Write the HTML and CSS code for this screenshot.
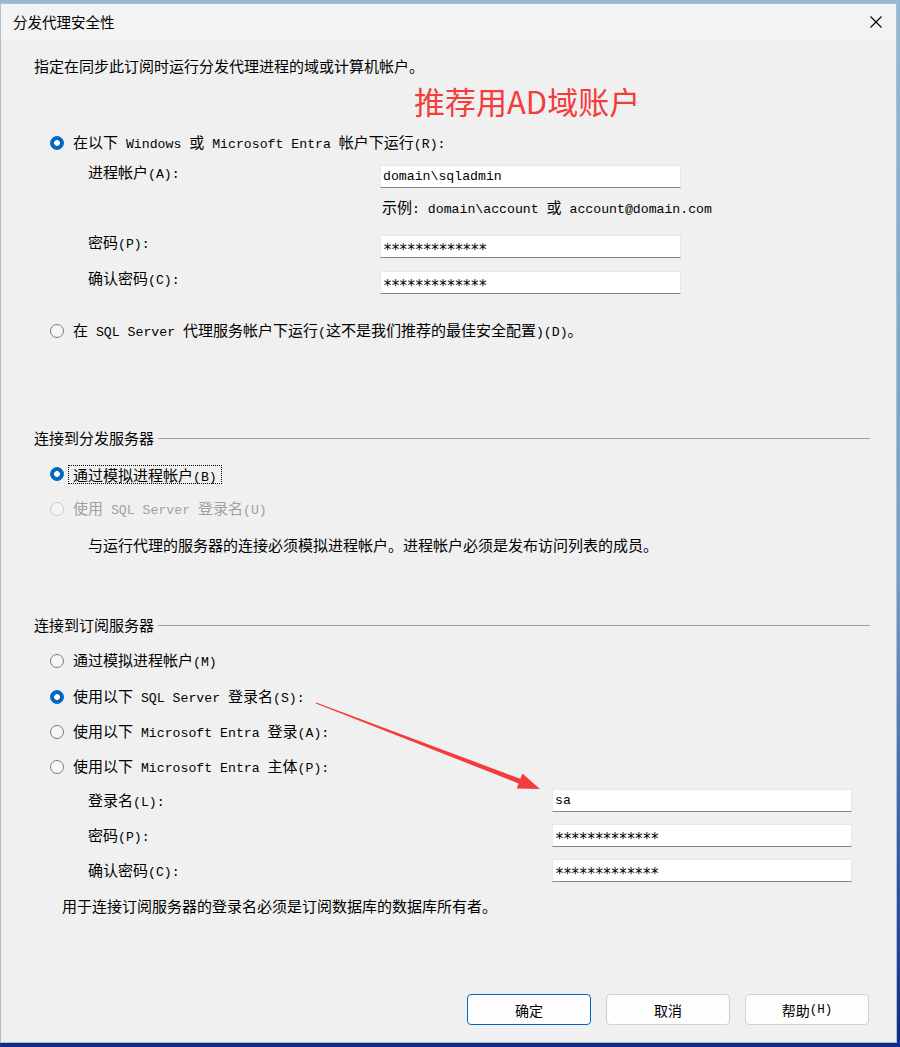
FILE: index.html
```html
<!DOCTYPE html>
<html lang="zh-CN">
<head>
<meta charset="utf-8">
<title>分发代理安全性</title>
<link rel="stylesheet" href="styles.css">
</head>
<body>
<div class="desktop">
  <div class="window">
    <div class="titlebar">
      <span class="title">分发代理安全性</span>
      <span class="close"><svg width="12" height="12" viewBox="0 0 12 12"><path d="M0.5 0.5 L11.5 11.5 M11.5 0.5 L0.5 11.5" stroke="#000" stroke-width="1.1" fill="none"/></svg></span>
    </div>
    <div class="content">
      <div class="row intro">指定在同步此订阅时运行分发代理进程的域或计算机帐户。</div>
      <div class="row note-red">推荐用AD域账户</div>
      <div class="row radio-row r1"><span class="radio on"></span><span>在以下<span class="en"> Windows </span>或<span class="en"> Microsoft Entra </span>帐户下运行<span class="en">(R):</span></span></div>
      <div class="row field-row f-acc"><span class="flabel">进程帐户<span class="en">(A):</span></span><span class="field">domain\sqladmin</span></div>
      <div class="row example"><span>示例<span class="en">: domain\account </span>或<span class="en"> account@domain.com</span></span></div>
      <div class="row field-row f-pwd"><span class="flabel">密码<span class="en">(P):</span></span><span class="field pw">*************</span></div>
      <div class="row field-row f-cfm"><span class="flabel">确认密码<span class="en">(C):</span></span><span class="field pw">*************</span></div>
      <div class="row radio-row r2"><span class="radio"></span><span>在<span class="en"> SQL Server </span>代理服务帐户下运行<span class="en">(</span>这不是我们推荐的最佳安全配置<span class="en">)(D)</span>。</span></div>

      <div class="row group g1">连接到分发服务器</div>
      <div class="row radio-row rb"><span class="radio on"></span><span class="focus">通过模拟进程帐户<span class="en">(B)</span></span></div>
      <div class="row radio-row ru dis"><span class="radio"></span><span>使用<span class="en"> SQL Server </span>登录名<span class="en">(U)</span></span></div>
      <div class="row hint h1">与运行代理的服务器的连接必须模拟进程帐户。进程帐户必须是发布访问列表的成员。</div>

      <div class="row group g2">连接到订阅服务器</div>
      <div class="row radio-row rm"><span class="radio"></span><span>通过模拟进程帐户<span class="en">(M)</span></span></div>
      <div class="row radio-row rs"><span class="radio on"></span><span>使用以下<span class="en"> SQL Server </span>登录名<span class="en">(S):</span></span></div>
      <div class="row radio-row ra"><span class="radio"></span><span>使用以下<span class="en"> Microsoft Entra </span>登录<span class="en">(A):</span></span></div>
      <div class="row radio-row rp"><span class="radio"></span><span>使用以下<span class="en"> Microsoft Entra </span>主体<span class="en">(P):</span></span></div>
      <div class="row field-row wide f-login"><span class="flabel">登录名<span class="en">(L):</span></span><span class="field">sa</span></div>
      <div class="row field-row wide f-pwd2"><span class="flabel">密码<span class="en">(P):</span></span><span class="field pw">*************</span></div>
      <div class="row field-row wide f-cfm2"><span class="flabel">确认密码<span class="en">(C):</span></span><span class="field pw">*************</span></div>
      <div class="row hint h2">用于连接订阅服务器的登录名必须是订阅数据库的数据库所有者。</div>

      <div class="buttons">
        <span class="btn primary">确定</span>
        <span class="btn">取消</span>
        <span class="btn">帮助<span class="en">(H)</span></span>
      </div>
    </div>
    <svg class="arrow" width="900" height="1047" viewBox="0 0 900 1047">
      <polygon points="316.2,702.5 520.4,778.8 522.4,773.6 540,789 516.6,788.6 518.6,783.4 315.8,703.5" fill="#f43c3c"/>
    </svg>
  </div>
</div>
</body>
</html>
```

FILE: styles.css
```css
* { box-sizing: border-box; }
html, body { margin: 0; padding: 0; }
body {
  width: 900px;
  height: 1047px;
  overflow: hidden;
  font-family: "Noto Sans CJK SC", sans-serif;
  font-size: 15px;
  color: #000;
}
.desktop {
  width: 900px;
  height: 1047px;
  padding: 3px 3px 4px 0;
  background: linear-gradient(180deg, #93bad8 0%, #6f9fcd 55%, #0d2c8c 100%);
}
.window {
  position: relative;
  height: 100%;
  border: 1px solid #b4bcc4;
  background: #f0f0f0;
  display: flex;
  flex-direction: column;
}
.titlebar {
  flex: none;
  height: 36px;
  background: #f3f3f3;
  display: flex;
  align-items: center;
  justify-content: space-between;
  padding: 0 14px 0 12px;
}
.title { font-size: 14.5px; line-height: 20px; }
.close { display: flex; width: 12px; height: 12px; }

.content {
  flex: 1;
  display: flex;
  flex-direction: column;
  padding-right: 26px;
}
.en {
  font-family: "Liberation Mono", monospace;
  font-size: 13.2px;
}
.row {
  display: flex;
  align-items: center;
  height: 24px;
  line-height: 20px;
  white-space: pre;
}
.intro { margin: 14px 0 0 33px; }
.note-red {
  margin: 8px 0 0 413px;
  height: 30px;
  line-height: 30px;
  font-size: 31px;
  color: #f43c3c;
}
.radio-row { margin-left: 49px; }
.radio {
  flex: none;
  width: 14px;
  height: 14px;
  margin-right: 9px;
  border-radius: 50%;
  border: 1px solid #7b7b7b;
  background: #f6f6f6;
}
.radio.on {
  border-color: #0067c0;
  background: radial-gradient(circle, #ffffff 0 2.6px, #0067c0 3.2px);
}
.dis { color: #a0a0a0; }
.dis .radio { border-color: #c8c8c8; background: #f4f4f4; }
.focus {
  margin-left: -5px;
  padding: 0 4px;
  height: 19px;
  line-height: 17px;
  border: 1px dotted #000;
}

.field-row { height: 23px; margin-left: 87px; align-items: flex-start; }
.flabel { width: 292px; flex: none; line-height: 16px; margin-top: -1px; }
.wide .flabel { width: 464px; line-height: 20px; margin-top: 1px; }
.field {
  width: 301px;
  height: 23px;
  display: flex;
  align-items: center;
  padding-left: 2px;
  background: #fff;
  border: 1px solid #e8e8e8;
  border-bottom-color: #858585;
  font-family: "Liberation Mono", monospace;
  font-size: 13.2px;
}
.field.pw {
  font-family: "DejaVu Sans Mono", monospace;
  font-size: 15px;
  letter-spacing: -1.1px;
  padding-top: 6px;
}
.wide .field { width: 300px; }
.example { margin: 10px 0 0 381px; height: 20px; }

.r1 { margin-top: 15px; }
.f-acc { margin-top: 10px; }
.f-pwd { margin-top: 17px; }
.f-cfm { margin-top: 13px; }
.r2 { margin-top: 25px; }

.group { margin-left: 33px; gap: 4px; }
.group::after { content: ""; flex: 1; height: 1px; background: #a0a0a0; }
.g1 { margin-top: 83px; }
.rb { margin-top: 12px; }
.ru { margin-top: 11px; }
.hint.h1 { margin: 12px 0 0 87px; }
.g2 { margin-top: 56px; }
.rm { margin-top: 12px; }
.rs { margin-top: 12px; }
.ra { margin-top: 11px; }
.rp { margin-top: 11px; }
.f-login { margin-top: 10px; }
.f-pwd2 { margin-top: 12px; }
.f-cfm2 { margin-top: 12px; }
.hint.h2 { margin: 12px 0 0 61px; }

.buttons {
  margin-top: 76px;
  display: flex;
  justify-content: flex-end;
  gap: 15px;
  padding-right: 1px;
}
.btn {
  width: 124px;
  height: 31px;
  display: flex;
  align-items: center;
  justify-content: center;
  font-size: 14px;
  background: #fdfdfd;
  border: 1px solid #d0d0d0;
  border-radius: 4px;
}
.btn .en { font-size: 12.5px; }
.btn.primary { border-color: #0067c0; }

.arrow {
  position: absolute;
  left: -1px;
  top: -4px;
  pointer-events: none;
}
```
